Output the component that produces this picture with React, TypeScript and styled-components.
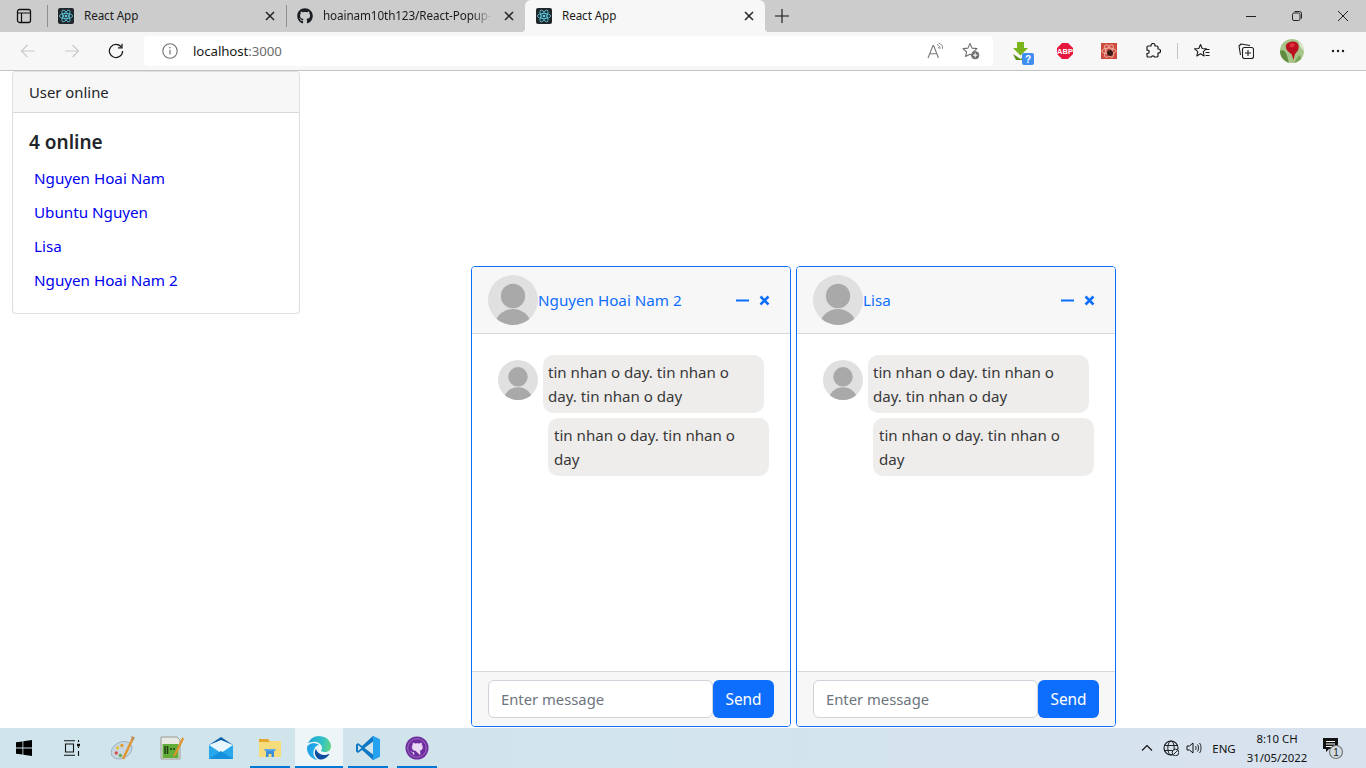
import React from "react";
import styled, { createGlobalStyle } from "styled-components";
import { FaGithub } from "react-icons/fa";

const uiFont = `"Noto Sans", "Open Sans", "Liberation Sans", sans-serif`;

const GlobalStyle = createGlobalStyle`
  html, body {
    margin: 0;
    height: 100%;
    overflow: hidden;
    background: #fff;
    font-family: ${uiFont};
  }
  * { box-sizing: border-box; }
`;

const Shell = styled.div`
  height: 100vh;
  display: flex;
  flex-direction: column;
`;

/* browser tabs */
const TabStrip = styled.div`
  height: 32px;
  flex: none;
  display: flex;
  background: #cccccc;
  align-items: flex-start;
`;

const StripButton = styled.div<{ $w: number; $nudge?: boolean }>`
  width: ${(p) => p.$w}px;
  height: 32px;
  flex: none;
  display: flex;
  align-items: center;
  justify-content: center;
  padding-left: ${(p) => (p.$nudge ? 1 : 0)}px;
  color: #111;
`;

const TabDivider = styled.div`
  width: 1px;
  height: 22px;
  margin-top: 5px;
  flex: none;
  background: #8e8e8e;
`;

const Tab = styled.div<{ $active?: boolean }>`
  position: relative;
  width: ${(p) => (p.$active ? 240 : 238)}px;
  height: 32px;
  flex: none;
  display: flex;
  align-items: center;
  gap: 10px;
  padding: 0 10px 0 ${(p) => (p.$active ? 11 : 10)}px;
  background: ${(p) => (p.$active ? "#f7f7f7" : "transparent")};
  border-radius: 6px 6px 0 0;
  ${(p) =>
    p.$active &&
    `
    &::before, &::after {
      content: "";
      position: absolute;
      bottom: 0;
      width: 4px;
      height: 4px;
    }
    &::before {
      left: -4px;
      background: radial-gradient(circle at 0 0, transparent 4px, #f7f7f7 4.5px);
    }
    &::after {
      right: -4px;
      background: radial-gradient(circle at 100% 0, transparent 4px, #f7f7f7 4.5px);
    }
  `}
`;

const TabTitle = styled.span<{ $fade?: boolean }>`
  flex: 1;
  min-width: 0;
  padding-bottom: 2px;
  font-size: 11.7px;
  letter-spacing: -0.1px;
  color: #1b1b1b;
  white-space: nowrap;
  overflow: hidden;
  ${(p) =>
    p.$fade &&
    `
    -webkit-mask-image: linear-gradient(to right, #000 88%, transparent 100%);
    mask-image: linear-gradient(to right, #000 88%, transparent 100%);
  `}
`;

const TabClose = styled.span`
  width: 14px;
  height: 14px;
  flex: none;
  margin-right: -1px;
  color: #222;
  display: flex;
  align-items: center;
  justify-content: center;
`;

const StripSpacer = styled.div`
  flex: 1;
`;

/* address row */
const Toolbar = styled.div`
  height: 39px;
  flex: none;
  display: flex;
  align-items: flex-start;
  padding: 0 6px;
  background: #f7f7f7;
  border-bottom: 1px solid #c3c3c3;
`;

const ToolButton = styled.div<{ $gap?: number }>`
  width: 44px;
  height: 38px;
  flex: none;
  display: flex;
  align-items: center;
  justify-content: center;
  margin-left: ${(p) => p.$gap ?? 0}px;
`;

const AddressBar = styled.div`
  width: 849px;
  height: 30px;
  margin: 4px 6px 0 6px;
  flex: none;
  display: flex;
  align-items: center;
  padding: 0 4px 0 18px;
  background: #fff;
  border-radius: 4px;
`;

const Url = styled.span`
  margin-left: 15px;
  flex: 1;
  font-size: 13.3px;
  letter-spacing: -0.1px;
  color: #1a1a1a;
  span {
    color: #6d6d6d;
  }
`;

const AddressAction = styled.span`
  width: 36px;
  display: flex;
  justify-content: center;
`;

const ToolDivider = styled.div`
  width: 1px;
  height: 16px;
  margin: 11px 2px 0 2px;
  flex: none;
  background: #c4c4c4;
`;

/* page */
const Page = styled.main`
  flex: 1;
  min-height: 0;
  display: flex;
  align-items: flex-start;
  padding-left: 12px;
`;

const Card = styled.section`
  width: 288px;
  flex: none;
  background: #fff;
  border: 1px solid rgba(0, 0, 0, 0.125);
  border-radius: 4px;
  overflow: hidden;
  color: #212529;
`;

const CardHeader = styled.div`
  padding: 8px 16px;
  height: 41px;
  font-size: 14.85px;
  line-height: 24px;
  background: #f7f7f7;
  border-bottom: 1px solid rgba(0, 0, 0, 0.125);
`;

const CardBody = styled.div`
  padding: 16px;
`;

const CardTitle = styled.h5`
  margin: 0 0 7px;
  padding-top: 1px;
  font-size: 19px;
  line-height: 24px;
  font-weight: 600;
`;

const UserList = styled.ul`
  list-style: none;
  margin: 0;
  padding: 0;
`;

const UserItem = styled.li`
  padding: 5px;
  font-size: 15.2px;
  line-height: 24px;
  color: #0000ee;
`;

const Dock = styled.div`
  align-self: flex-end;
  margin: 0 0 1px 171px;
  display: flex;
  gap: 5px;
`;

const ChatWindow = styled.section`
  width: 320px;
  height: 461px;
  display: flex;
  flex-direction: column;
  background: #fff;
  border: 1px solid #0d6efd;
  border-radius: 4px;
  overflow: hidden;
`;

const ChatHeader = styled.header`
  height: 67px;
  flex: none;
  display: flex;
  align-items: center;
  padding: 8px 16px;
  background: #f7f7f7;
  border-bottom: 1px solid rgba(0, 0, 0, 0.125);
`;

const ChatName = styled.span`
  flex: 1;
  font-size: 15.2px;
  line-height: 24px;
  color: #0d6efd;
`;

const ChatControls = styled.div`
  display: flex;
  align-items: center;
  gap: 10px;
  margin-right: 4px;
`;

const ChatBody = styled.div`
  flex: 1;
  display: flex;
  flex-direction: column;
  gap: 5px;
  padding: 21px 0 0 26px;
`;

const MessageRow = styled.div<{ $indent?: boolean }>`
  display: flex;
  align-items: flex-start;
  gap: 5px;
  padding-left: ${(p) => (p.$indent ? 50 : 0)}px;
`;

const Bubble = styled.div<{ $inset?: number }>`
  width: 221px;
  padding: 5px 5px 5px ${(p) => p.$inset ?? 5}px;
  font-size: 15.1px;
  line-height: 24px;
  color: #383838;
  background: #eeedec;
  border-radius: 10px;
`;

const MessageAvatar = styled.div`
  margin-top: 5px;
  display: flex;
`;

const ChatFooter = styled.footer`
  height: 55px;
  flex: none;
  display: flex;
  padding: 8px 16px;
  background: #f7f7f7;
  border-top: 1px solid rgba(0, 0, 0, 0.125);
`;

const MessageInput = styled.input`
  width: 225px;
  height: 38px;
  padding: 6px 12px;
  font-family: ${uiFont};
  font-size: 14.8px;
  color: #212529;
  background: #fff;
  border: 1px solid #ced4da;
  border-radius: 6px;
  outline: none;
  &::placeholder {
    color: #6c757d;
    opacity: 1;
  }
`;

const SendButton = styled.button`
  width: 61px;
  height: 38px;
  padding: 0;
  font-family: ${uiFont};
  font-size: 15.4px;
  color: #fff;
  background: #0d6efd;
  border: none;
  border-radius: 6px;
`;

/* windows taskbar */
const Taskbar = styled.footer`
  height: 40px;
  flex: none;
  display: flex;
  align-items: stretch;
  background: linear-gradient(90deg, #cfe4ec 0%, #d2e4ec 45%, #d8e2ef 100%);
`;

const SystemSlot = styled.div`
  width: 48px;
  flex: none;
  display: flex;
  align-items: center;
  justify-content: center;
`;

const TaskSlot = styled.div<{ $open?: boolean; $focus?: boolean }>`
  width: 49px;
  flex: none;
  display: flex;
  align-items: center;
  justify-content: center;
  position: relative;
  border-left: 1px solid transparent;
  background-clip: padding-box;
  background-color: ${(p) => (p.$focus ? "#edf5f9" : "transparent")};
  &:nth-child(3) {
    margin-left: 2px;
  }
  ${(p) =>
    p.$open &&
    `
    &::after {
      content: "";
      position: absolute;
      bottom: 0;
      height: 2px;
      left: ${p.$focus ? 0 : 4}px;
      right: ${p.$focus ? 0 : 4}px;
      background: #0078d4;
    }
  `}
`;

const TaskSpacer = styled.div`
  flex: 1;
`;

const Tray = styled.div`
  display: flex;
  align-items: center;
  color: #111;
`;

const TrayIcon = styled.span<{ $w: number }>`
  width: ${(p) => p.$w}px;
  display: flex;
  justify-content: center;
`;

const TrayLang = styled.span`
  width: 30px;
  margin-left: 4px;
  text-align: center;
  font-size: 11.5px;
`;

const Clock = styled.div`
  width: 76px;
  text-align: center;
  font-size: 11.4px;
  line-height: 19px;
`;

const NotifySlot = styled.div`
  width: 36px;
  margin-right: 15px;
  display: flex;
  justify-content: center;
`;

const Glyph = ({ size = 16, children }: { size?: number; children: React.ReactNode }) => (
  <svg width={size} height={size} viewBox={`0 0 ${size} ${size}`} fill="none" style={{ display: "block", flex: "none" }}>
    {children}
  </svg>
);

const ReactFavicon = () => (
  <Glyph>
    <rect width="16" height="16" rx="2" fill="#20272b" />
    <g stroke="#5fd0e6" strokeWidth="0.8" fill="none">
      <ellipse cx="8" cy="8" rx="6.6" ry="2.6" />
      <ellipse cx="8" cy="8" rx="6.6" ry="2.6" transform="rotate(60 8 8)" />
      <ellipse cx="8" cy="8" rx="6.6" ry="2.6" transform="rotate(120 8 8)" />
    </g>
    <circle cx="8" cy="8" r="1.3" fill="#5fd0e6" />
  </Glyph>
);

const CloseGlyph = () => (
  <Glyph size={12}>
    <path d="M2 2l8 8M10 2l-8 8" stroke="#222" strokeWidth="1.5" />
  </Glyph>
);

const UserAvatar = ({ size }: { size: number }) => (
  <svg width={size} height={size} viewBox="0 0 50 50" style={{ display: "block", flex: "none" }}>
    <defs>
      <clipPath id={`round-${size}`}>
        <circle cx="25" cy="25" r="25" />
      </clipPath>
    </defs>
    <circle cx="25" cy="25" r="25" fill="#e0e0e0" />
    <g clipPath={`url(#round-${size})`} fill="#a9a9a9">
      <circle cx="25" cy="21" r="12.2" />
      <ellipse cx="25" cy="53" rx="19" ry="19" />
    </g>
  </svg>
);

const Chat = ({ name }: { name: string }) => (
  <ChatWindow>
    <ChatHeader>
      <UserAvatar size={50} />
      <ChatName>{name}</ChatName>
      <ChatControls>
        <Glyph size={13}>
          <path d="M0 6.500h13" stroke="#0d6efd" strokeWidth="2" />
        </Glyph>
        <Glyph size={11}>
          <path d="M1.500 1.500l8 8M9.500 1.500l-8 8" stroke="#0d6efd" strokeWidth="2.500" />
        </Glyph>
      </ChatControls>
    </ChatHeader>
    <ChatBody>
      <MessageRow>
        <MessageAvatar>
          <UserAvatar size={40} />
        </MessageAvatar>
        <Bubble>tin nhan o day. tin nhan o day. tin nhan o day</Bubble>
      </MessageRow>
      <MessageRow $indent>
        <Bubble $inset={6}>tin nhan o day. tin nhan o day</Bubble>
      </MessageRow>
    </ChatBody>
    <ChatFooter>
      <MessageInput placeholder="Enter message" />
      <SendButton>Send</SendButton>
    </ChatFooter>
  </ChatWindow>
);

const users = ["Nguyen Hoai Nam", "Ubuntu Nguyen", "Lisa", "Nguyen Hoai Nam 2"];

export default function App() {
  return (
    <Shell>
      <GlobalStyle />
      <TabStrip>
        <StripButton $w={47} $nudge>
          <Glyph>
            <rect x="1.500" y="1.500" width="13" height="13" rx="2" stroke="#111" strokeWidth="1.300" />
            <path d="M1.500 5h13M5.500 5v9" stroke="#111" strokeWidth="1.200" />
          </Glyph>
        </StripButton>
        <TabDivider />
        <Tab>
          <ReactFavicon />
          <TabTitle>React App</TabTitle>
          <TabClose>
            <CloseGlyph />
          </TabClose>
        </Tab>
        <TabDivider />
        <Tab>
          <FaGithub size={16} color="#1b1f23" style={{ flex: "none" }} />
          <TabTitle $fade>hoainam10th123/React-Popup-Chat</TabTitle>
          <TabClose>
            <CloseGlyph />
          </TabClose>
        </Tab>
        <Tab $active>
          <ReactFavicon />
          <TabTitle>React App</TabTitle>
          <TabClose>
            <CloseGlyph />
          </TabClose>
        </Tab>
        <StripButton $w={34}>
          <Glyph>
            <path d="M8 1v14M1 8h14" stroke="#111" strokeWidth="1.100" />
          </Glyph>
        </StripButton>
        <StripSpacer />
        <StripButton $w={46}>
          <Glyph size={12}>
            <path d="M1 6.500h10" stroke="#222" />
          </Glyph>
        </StripButton>
        <StripButton $w={46}>
          <Glyph size={12}>
            <rect x="1.500" y="3" width="7.500" height="7.500" rx="1.500" stroke="#222" />
            <path d="M3.500 1.500h5a2 2 0 0 1 2 2v5" stroke="#222" />
          </Glyph>
        </StripButton>
        <StripButton $w={46}>
          <Glyph size={12}>
            <path d="M1 1l10 10M11 1L1 11" stroke="#222" />
          </Glyph>
        </StripButton>
      </TabStrip>

      <Toolbar>
        <ToolButton>
          <Glyph>
            <path d="M15 8H1.500M7.500 2L1.500 8l6 6" stroke="#c9c9c9" strokeWidth="1.100" />
          </Glyph>
        </ToolButton>
        <ToolButton>
          <Glyph>
            <path d="M1 8h13.500M8.500 2l6 6-6 6" stroke="#c9c9c9" strokeWidth="1.100" />
          </Glyph>
        </ToolButton>
        <ToolButton>
          <Glyph>
            <path d="M13.400 4.200A6.600 6.600 0 1 0 14.600 8" stroke="#1c1c1c" strokeWidth="1.250" />
            <path d="M14 .8v4h-4" stroke="#1c1c1c" strokeWidth="1.250" />
          </Glyph>
        </ToolButton>
        <AddressBar>
          <Glyph>
            <circle cx="8" cy="8" r="7.200" stroke="#707070" strokeWidth="1.100" />
            <path d="M8 7v4.500" stroke="#707070" strokeWidth="1.200" />
            <circle cx="8" cy="4.800" r="0.800" fill="#707070" />
          </Glyph>
          <Url>
            localhost<span>:3000</span>
          </Url>
          <AddressAction>
            <Glyph>
              <path d="M1 15L6 2.500h.6L11.500 15M2.800 10.800h7" stroke="#7a7a7a" strokeWidth="1.100" />
              <path d="M10 1.500c2 .6 3 2 3.200 4M11 4.200c.7.3 1 .8 1.200 1.600M11.500 0c3 .8 4.200 3 4.300 6" stroke="#7a7a7a" strokeWidth="0.900" />
            </Glyph>
          </AddressAction>
          <AddressAction>
            <Glyph size={18}>
              <path d="M8 1.500l2 4.600 5 .5-3.700 3.300 1 4.600L8 12.200 3.600 14.600l1-4.600L1 6.600l5-.5z" stroke="#707070" strokeWidth="1.100" strokeLinejoin="round" />
              <circle cx="13.200" cy="13.200" r="4" fill="#707070" />
              <path d="M13.200 11v4.400M11 13.200h4.400" stroke="#fff" strokeWidth="1" />
            </Glyph>
          </AddressAction>
        </AddressBar>
        <ToolButton>
          <svg width="24" height="24" viewBox="0 0 24 24" style={{ display: "block", marginLeft: 4, marginTop: 4 }}>
            <path d="M6 1h7v6h4l-7.500 7.500L2 7h4z" fill="#7ab51d" />
            <path d="M2 13l7.500 5 3-2v3H5z" fill="#5e8f12" />
            <rect x="11" y="12" width="12" height="12" rx="2" fill="#3f8ef0" />
            <text x="17" y="22" textAnchor="middle" fontSize="10" fontWeight="700" fill="#fff" fontFamily="Liberation Sans">?</text>
          </svg>
        </ToolButton>
        <ToolButton>
          <svg width="16" height="16" viewBox="0 0 16 16" style={{ display: "block" }}>
            <path d="M5 0h6l5 5v6l-5 5H5l-5-5V5z" fill="#e8173d" />
            <text x="8" y="11" textAnchor="middle" fontSize="7.500" fontWeight="700" fill="#fff" fontFamily="Liberation Sans">ABP</text>
          </svg>
        </ToolButton>
        <ToolButton>
          <Glyph>
            <rect width="16" height="16" fill="#cf4a3a" />
            <g stroke="#f2c4bb" strokeWidth="0.800">
              <ellipse cx="8" cy="8" rx="7" ry="3" />
              <ellipse cx="8" cy="8" rx="7" ry="3" transform="rotate(60 8 8)" />
              <ellipse cx="8" cy="8" rx="7" ry="3" transform="rotate(120 8 8)" />
            </g>
            <circle cx="9" cy="10" r="3" fill="#3a1b16" />
          </Glyph>
        </ToolButton>
        <ToolButton>
          <Glyph>
            <path
              d="M6 2.500a2 2 0 0 1 4 0V3h2a1 1 0 0 1 1 1v2h.5a2 2 0 0 1 0 4H13v3a1 1 0 0 1-1 1H9.500a1.600 1.600 0 0 0-3.100 0H3a1 1 0 0 1-1-1v-2.500h.5a1.700 1.700 0 0 0 0-3.400H2V4a1 1 0 0 1 1-1h3z"
              stroke="#1c1c1c"
              strokeWidth="1.200"
            />
          </Glyph>
        </ToolButton>
        <ToolDivider />
        <ToolButton>
          <Glyph>
            <path d="M6.500 1.500l1.700 4 4.300.4-3.300 2.800 1 4.300-3.700-2.300-3.700 2.300 1-4.300L.5 5.900l4.300-.4z" stroke="#1c1c1c" strokeWidth="1.100" strokeLinejoin="round" />
            <path d="M11 6.500h4.500M11.500 9.500h4M11.500 12.500h4" stroke="#1c1c1c" strokeWidth="1.100" />
          </Glyph>
        </ToolButton>
        <ToolButton>
          <Glyph>
            <rect x="4.500" y="4.500" width="11" height="11" rx="2" stroke="#1c1c1c" strokeWidth="1.100" />
            <path d="M10 7v6M7 10h6" stroke="#1c1c1c" strokeWidth="1.100" />
            <path d="M12 2.500L3 1 1 3l1.500 9" stroke="#1c1c1c" strokeWidth="1.100" strokeLinejoin="round" />
          </Glyph>
        </ToolButton>
        <ToolButton $gap={2}>
          <svg width="24" height="24" viewBox="0 0 24 24" style={{ display: "block", borderRadius: "50%" }}>
            <rect width="24" height="24" fill="#a7c48a" />
            <path d="M0 12c6-3 7 5 9 12H0z" fill="#5f8c3e" />
            <path d="M18 0h6v12c-3-2-5-7-6-12z" fill="#dfe8cf" />
            <path d="M19 16c2 2 3 4 1 8h-6z" fill="#7aa254" />
            <path d="M6 6c2-4 10-5 12-1 2 5-1 8-3 10l-1.500 6-2-6C8 13 5 10 6 6z" fill="#bb1020" />
            <path d="M10 5c2-1 4-1 5 1-1 2-3 3-5 2z" fill="#e2303f" />
          </svg>
        </ToolButton>
        <ToolButton $gap={2}>
          <Glyph>
            <circle cx="3" cy="8" r="1.200" fill="#1c1c1c" />
            <circle cx="8" cy="8" r="1.200" fill="#1c1c1c" />
            <circle cx="13" cy="8" r="1.200" fill="#1c1c1c" />
          </Glyph>
        </ToolButton>
      </Toolbar>

      <Page>
        <Card>
          <CardHeader>User online</CardHeader>
          <CardBody>
            <CardTitle>4 online</CardTitle>
            <UserList>
              {users.map((u) => (
                <UserItem key={u}>{u}</UserItem>
              ))}
            </UserList>
          </CardBody>
        </Card>
        <Dock>
          <Chat name="Nguyen Hoai Nam 2" />
          <Chat name="Lisa" />
        </Dock>
      </Page>

      <Taskbar>
        <SystemSlot>
          <Glyph>
            <path d="M0 2.300L6.500 1.400v6.200H0zM7.300 1.300L16 0v7.600H7.300zM0 8.400h6.500v6.200L0 13.700zM7.300 8.400H16V16l-8.700-1.300z" fill="#000" />
          </Glyph>
        </SystemSlot>
        <SystemSlot>
          <Glyph>
            <path d="M0 .8h11M0 15.200h11M1.500 4h8v8h-8zM14.500 0v2M14.500 6.500v1.500M14.500 11v5" stroke="#111" strokeWidth="1.100" />
            <rect x="13" y="3.800" width="3" height="2.500" fill="#111" />
          </Glyph>
        </SystemSlot>
        <TaskSlot>
          <Glyph size={24}>
            <g transform="rotate(-28 11 14)">
              <ellipse cx="10.500" cy="14" rx="11" ry="8" fill="#c8d8e3" stroke="#8aa3b3" strokeWidth="0.700" />
              <circle cx="4.500" cy="14" r="1.700" fill="#d8524a" />
              <circle cx="8" cy="10" r="1.700" fill="#e6c13c" />
              <circle cx="13" cy="10" r="1.700" fill="#e39a2e" />
              <circle cx="7" cy="18" r="1.700" fill="#6aa84f" />
            </g>
            <path d="M22 2L12 23" stroke="#e0962e" strokeWidth="2.400" />
            <path d="M20 0l4 1.500-2.500 4z" fill="#b98c5a" />
          </Glyph>
        </TaskSlot>
        <TaskSlot>
          <Glyph size={24}>
            <path d="M1 1h16l3 3v19H1z" fill="#e9e9e4" stroke="#9a9a94" />
            <rect x="2.500" y="8" width="16" height="14" fill="#63ad3a" />
            <path d="M5 10v8M7.500 10v8M10 13h2M13 13h2" stroke="#1e3d10" strokeWidth="1.500" />
            <path d="M22.500 1L14 18l-1 3 3-2L24 3z" fill="#e0932a" />
          </Glyph>
        </TaskSlot>
        <TaskSlot>
          <Glyph size={24}>
            <path d="M0 9L12 1l12 8z" fill="#0b5ea8" />
            <rect y="9" width="24" height="14" fill="#28a8ea" />
            <path d="M0 9l12 8 12-8-12-5z" fill="#e9f6fd" />
            <path d="M0 23l12-8 12 8z" fill="#1490df" />
          </Glyph>
        </TaskSlot>
        <TaskSlot $open>
          <Glyph size={24}>
            <path d="M1 3h9l2 2h11v16H1z" fill="#f7dc7c" />
            <path d="M1 3h9l2 3H1z" fill="#e2a72c" />
            <path d="M8 21v-6h8v6h-2.500v-3h-3v3z" fill="#3b8fd8" />
            <rect x="6.500" y="13" width="11" height="2" fill="#5aa8e8" />
          </Glyph>
        </TaskSlot>
        <TaskSlot $open $focus>
          <svg width="24" height="24" viewBox="0 0 24 24" style={{ display: "block" }}>
            <defs>
              <linearGradient id="edgeTop" x1="0" y1="0.500" x2="1" y2="0.600">
                <stop offset="0" stopColor="#1fa5d8" />
                <stop offset="0.600" stopColor="#33c2c8" />
                <stop offset="1" stopColor="#5fd67e" />
              </linearGradient>
              <linearGradient id="edgeLeft" x1="0" y1="0" x2="1" y2="1">
                <stop offset="0" stopColor="#1b9de2" />
                <stop offset="1" stopColor="#2bb4ee" />
              </linearGradient>
            </defs>
            <path d="M21.860 17.860q.14 0 .25.12.1.13.1.25t-.11.33l-.32.46-.43.53-.44.5q-.21.25-.38.42l-.22.23q-.58.53-1.340 1.040-.76.51-1.600.91-.86.4-1.740.64t-1.670.24q-.9 0-1.690-.28-.8-.28-1.480-.78-.68-.5-1.220-1.170-.53-.66-.92-1.440-.38-.77-.58-1.600-.2-.83-.2-1.670 0-1 .32-1.960.33-.97.87-1.800.14.95.55 1.770.41.82 1.020 1.500.6.68 1.380 1.210.78.54 1.640.9.86.36 1.770.56.92.2 1.800.2 1.120 0 2.180-.24 1.060-.23 2.060-.72l.2-.1.2-.05z" fill="#0d4f9e" />
            <path d="M6.360 16.590q0 1.100.27 2.150.27 1.060.78 2.030.51.96 1.240 1.770.74.82 1.660 1.400-1.470-.2-2.800-.74-1.330-.55-2.480-1.370-1.150-.83-2.080-1.900-.92-1.070-1.580-2.330T.36 14.940Q0 13.540 0 12.060q0-.81.32-1.490.31-.68.83-1.230.53-.55 1.200-.96.66-.4 1.350-.66.74-.27 1.500-.39.78-.12 1.550-.12.7 0 1.420.1.72.12 1.400.35.68.23 1.320.57.63.35 1.160.83-.35 0-.7.07-.33.07-.65.23v-.02q-.63.28-1.200.74-.57.46-1.050 1.040-.48.58-.87 1.260-.38.67-.65 1.390-.27.71-.42 1.440-.15.72-.15 1.380z" fill="url(#edgeLeft)" />
            <path d="M11.960.06q1.700 0 3.330.39 1.630.38 3.070 1.150 1.430.77 2.620 1.930 1.180 1.160 1.980 2.700.49.94.76 1.960.28 1 .28 2.080 0 .89-.23 1.700-.24.8-.69 1.480-.45.68-1.100 1.220-.64.53-1.450.88-.54.24-1.110.36-.58.13-1.160.13-.42 0-.97-.03-.54-.03-1.100-.12-.55-.09-1.050-.28-.5-.19-.84-.5-.12-.09-.23-.24-.1-.16-.1-.33 0-.15.16-.35.16-.2.35-.5.2-.28.36-.68.16-.4.16-.95 0-1.060-.4-1.960-.4-.91-1.060-1.640-.66-.73-1.520-1.270-.86-.55-1.790-.89-.84-.3-1.720-.44-.87-.14-1.760-.14-1.550 0-3.060.45T.94 7.550q.71-1.740 1.810-3.130 1.100-1.380 2.520-2.350Q6.680 1.100 8.370.58q1.700-.52 3.580-.52z" fill="url(#edgeTop)" />
          </svg>
        </TaskSlot>
        <TaskSlot $open>
          <Glyph size={24}>
            <path d="M17 0l7 3.500v17L17 24 6 14l-4 3-2-1.500V8.500L2 7l4 3z" fill="#0f78c4" />
            <path d="M17 5.500v13L8.500 12z" fill="#d2e4ec" />
            <path d="M2 9l3.500 3L2 15z" fill="#d2e4ec" />
            <path d="M17 0l7 3.500v17L17 24z" fill="#25a2f0" />
          </Glyph>
        </TaskSlot>
        <TaskSlot $open>
          <Glyph size={24}>
            <circle cx="12" cy="12" r="11.500" fill="#6e2b9e" />
            <circle cx="12" cy="12" r="9.300" stroke="#a880c6" strokeWidth="0.800" />
            <path d="M9 19v-2.500c-2 .4-2.800-.6-3.300-1.700M15 19v-3c0-.8-.3-1.200-.6-1.400 1.800-.3 3.100-1.200 3.100-3.400 0-1-.3-1.700-.8-2.300.1-.5.1-1.300-.2-2-.7 0-1.500.4-2.100.8a8 8 0 0 0-4.200 0c-.6-.4-1.400-.8-2.100-.8-.3.7-.3 1.500-.2 2-.5.600-.8 1.300-.8 2.300 0 2.200 1.300 3.100 3.100 3.400" fill="#ead9f4" stroke="#ead9f4" strokeWidth="0.500" />
          </Glyph>
        </TaskSlot>
        <TaskSpacer />
        <Tray>
          <TrayIcon $w={24}>
            <Glyph size={12}>
              <path d="M1 8.500L6 3.500l5 5" stroke="#111" strokeWidth="1.100" />
            </Glyph>
          </TrayIcon>
          <TrayIcon $w={24}>
            <Glyph>
              <circle cx="8" cy="8" r="7" stroke="#111" strokeWidth="1.100" />
              <ellipse cx="8" cy="8" rx="3.200" ry="7" stroke="#111" strokeWidth="0.900" />
              <path d="M1 5.500h14M1 10.500h14" stroke="#111" strokeWidth="0.900" />
              <circle cx="12.500" cy="12.500" r="3.300" fill="#d2e4ec" stroke="#111" strokeWidth="0.900" />
              <path d="M10.500 14.500l4-4" stroke="#111" strokeWidth="0.900" />
            </Glyph>
          </TrayIcon>
          <TrayIcon $w={22}>
            <Glyph>
              <path d="M1 6v4h2.500L7 13V3L3.500 6z" stroke="#111" strokeWidth="1" strokeLinejoin="round" />
              <path d="M9.500 6c.7.800.7 3.200 0 4M11.500 4.500c1.300 1.500 1.300 5.500 0 7M13.500 3c2 2.500 2 7.500 0 10" stroke="#111" strokeWidth="0.900" />
            </Glyph>
          </TrayIcon>
          <TrayLang>ENG</TrayLang>
          <Clock>
            8:10 CH
            <br />
            31/05/2022
          </Clock>
          <NotifySlot>
            <svg width="24" height="24" viewBox="0 0 24 24" style={{ display: "block" }}>
              <path d="M2 2h15v11H8l-3 3v-3H2z" fill="#111" />
              <path d="M5 5.500h9M5 8h9M5 10.500h6" stroke="#fff" strokeWidth="1" />
              <circle cx="15" cy="16" r="6.500" fill="#d0dbe2" stroke="#777" strokeWidth="1.200" />
              <text x="15" y="20" textAnchor="middle" fontSize="10" fill="#222" fontFamily="Liberation Sans">1</text>
            </svg>
          </NotifySlot>
        </Tray>
      </Taskbar>
    </Shell>
  );
}
